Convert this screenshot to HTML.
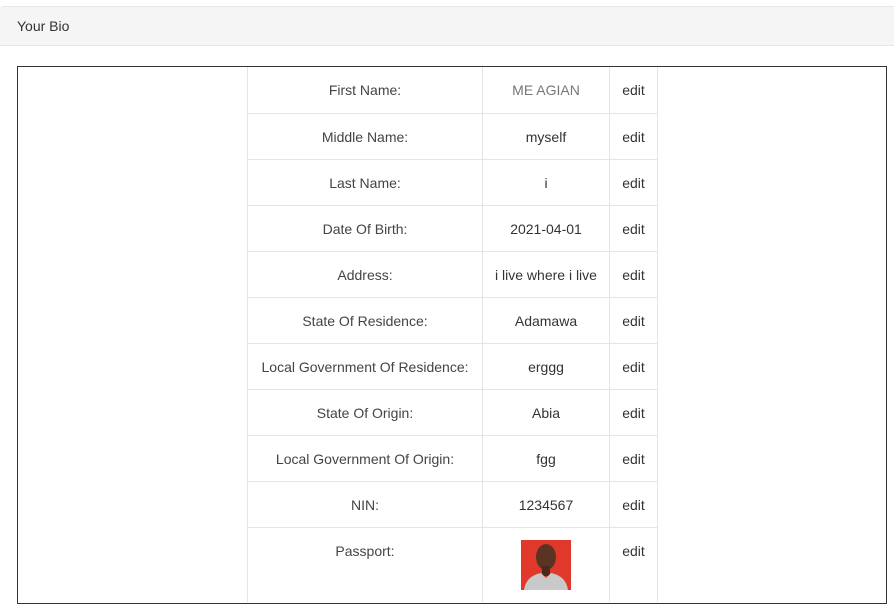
<!DOCTYPE html>
<html><head><meta charset="utf-8"><style>
body{margin:0;width:894px;height:606px;background:#fff;font-family:"Liberation Sans",Arial,sans-serif;font-size:14px;color:#333;position:relative;overflow:hidden}
.hd{position:absolute;left:0;top:6px;width:894px;height:38px;background:#f5f5f5;border-top:1px solid #e7e7e7;border-bottom:1px solid #e7e7e7;border-top-left-radius:4px}
.hd span{position:absolute;left:17px;top:11px;color:#333}
.box{position:absolute;left:17px;top:66px;width:868px;height:536px;border:1px solid #333}
table{position:absolute;left:229px;top:0;border-collapse:collapse}
td{border:1px solid #e5e5e5;text-align:center;height:45px;padding:0;vertical-align:middle;white-space:nowrap}
td.l{width:234px;color:#444}
td.v{width:126px}
td.e{width:47px}
tr:first-child td{border-top:none;height:46px}
tr.last td{height:74px;vertical-align:top;padding-top:0}
tr.last td{border-bottom:none}
</style></head><body>
<div class="hd"><span>Your Bio</span></div>
<div class="box">
<table>
<tr><td class="l">First Name:</td><td class="v" style="color:#777">ME AGIAN</td><td class="e">edit</td></tr>
<tr><td class="l">Middle Name:</td><td class="v">myself</td><td class="e">edit</td></tr>
<tr><td class="l">Last Name:</td><td class="v">i</td><td class="e">edit</td></tr>
<tr><td class="l">Date Of Birth:</td><td class="v">2021-04-01</td><td class="e">edit</td></tr>
<tr><td class="l">Address:</td><td class="v">i live where i live</td><td class="e">edit</td></tr>
<tr><td class="l">State Of Residence:</td><td class="v">Adamawa</td><td class="e">edit</td></tr>
<tr><td class="l">Local Government Of Residence:</td><td class="v">erggg</td><td class="e">edit</td></tr>
<tr><td class="l">State Of Origin:</td><td class="v">Abia</td><td class="e">edit</td></tr>
<tr><td class="l">Local Government Of Origin:</td><td class="v">fgg</td><td class="e">edit</td></tr>
<tr><td class="l">NIN:</td><td class="v">1234567</td><td class="e">edit</td></tr>
<tr class="last"><td class="l"><div style="margin-top:15px">Passport:</div></td><td class="v"><svg width="50" height="50" style="display:block;margin:12px auto 0" viewBox="0 0 50 50"><rect width="50" height="50" fill="#e0392b"/><ellipse cx="25" cy="17" rx="10" ry="13" fill="#5a3322"/><rect x="21" y="26" width="8" height="10" fill="#4a2a1c"/><path d="M3 50 Q5 36 20 33 L25 38 L30 33 Q45 36 47 50Z" fill="#c9c9c9"/></svg></td><td class="e"><div style="margin-top:15px">edit</div></td></tr>
</table>
</div>
</body></html>
